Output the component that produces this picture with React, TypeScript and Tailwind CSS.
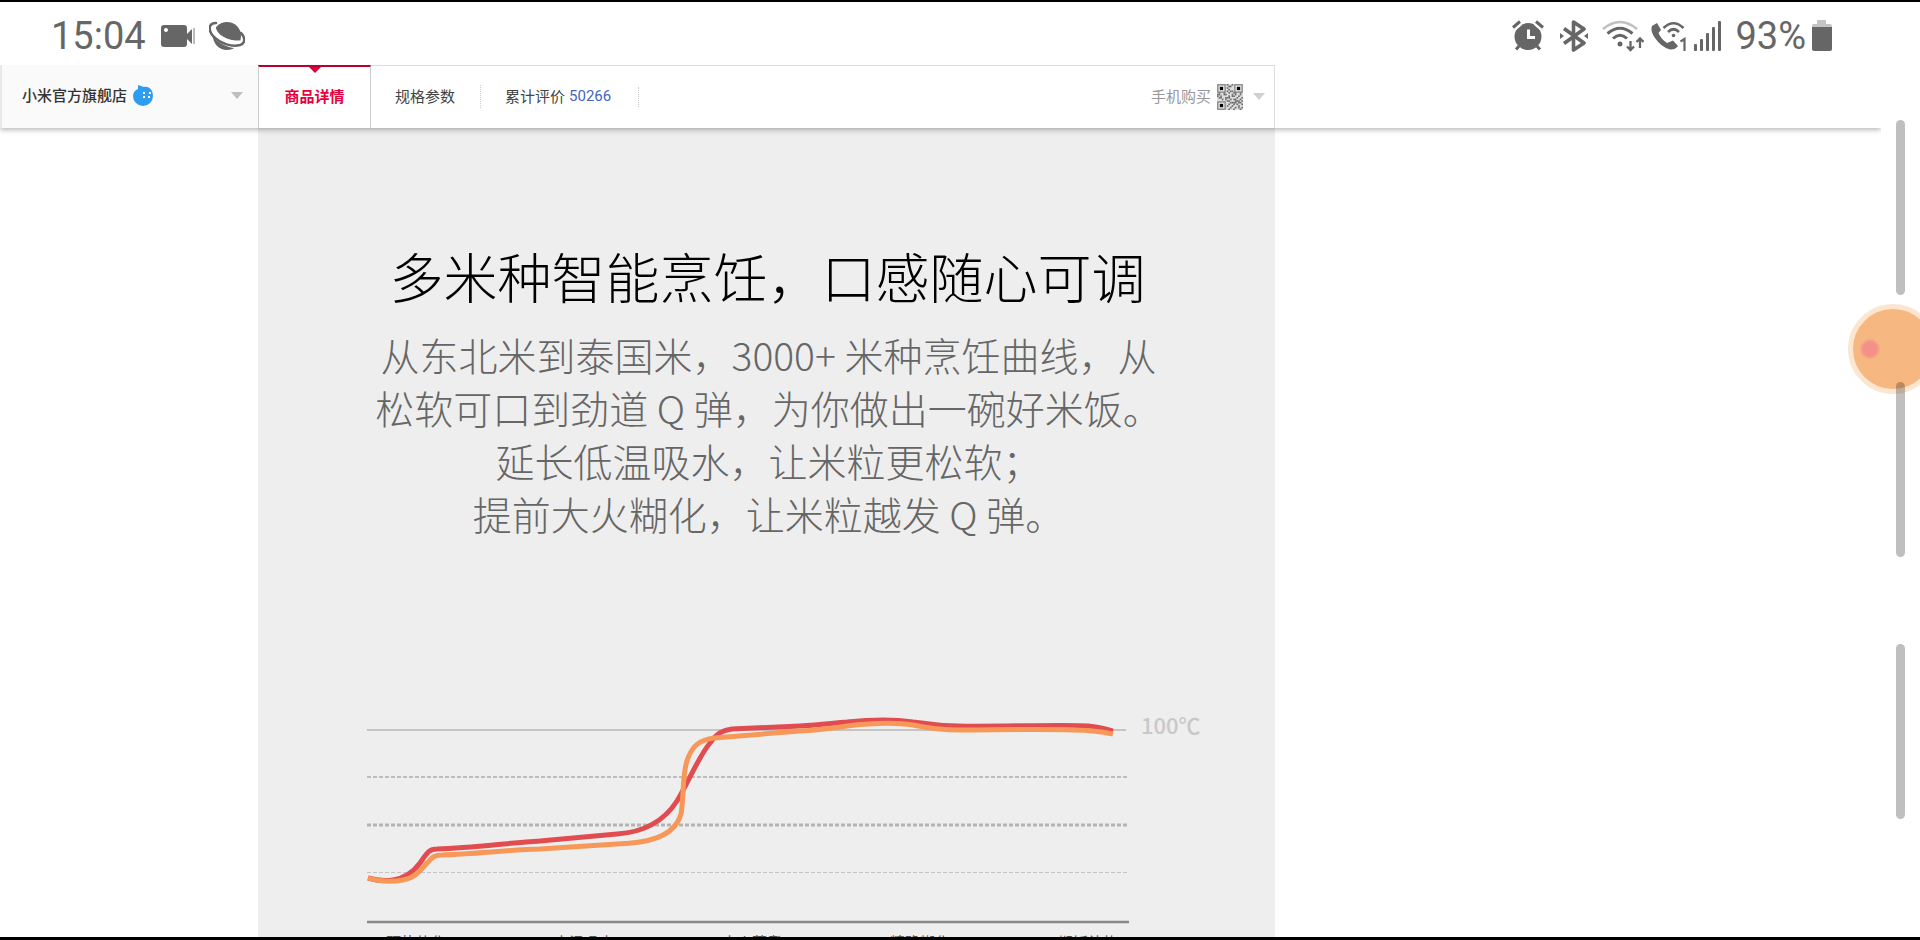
import clsx from "clsx";

const stages = ["预热软化", "中温吸水", "大火蒸煮", "精确糊化", "焖饭补炊"];

// 1 = dark module, the three finder squares are drawn separately
const qrRows = [
  "0000001001000000",
  "0000000110000000",
  "0000001000000000",
  "0000000100000000",
  "0000001011000000",
  "0100100100110010",
  "1100110001010010",
  "1010000101100100",
  "0110011100001001",
  "0001010010110010",
  "0000001100011101",
  "0000000011110110",
  "0000000100101001",
  "0000001001000100",
  "0000000010010101",
  "0000000100100010",
];

function QrCode() {
  return (
    <svg viewBox="0 0 32 32" className="h-[26px] w-[26px] shrink-0" aria-hidden="true">
      <rect width="32" height="32" fill="#dedede" />
      {qrRows.map((row, y) =>
        row.split("").map((cell, x) =>
          cell === "1" ? <rect key={`${x}-${y}`} x={x * 2} y={y * 2} width="2" height="2" fill="#6a6a6a" /> : null
        )
      )}
      {[[0, 0], [21, 0], [0, 21]].map(([x, y]) => (
        <g key={`${x}-${y}`}>
          <rect x={x + 1} y={y + 1} width="9" height="9" fill="#e2e2e2" stroke="#808080" strokeWidth="1.5" />
          <rect x={x + 3.5} y={y + 3.5} width="4" height="4" fill="#000" />
        </g>
      ))}
    </svg>
  );
}

function StatusBar() {
  return (
    <header className="flex h-[65px] shrink-0 items-center border-t-2 border-black pt-1 pr-[87px] pl-[51px] font-[Roboto,sans-serif] text-[38px] leading-none font-normal text-[#666]">
      <time className="mr-[15px]">15:04</time>
      <svg viewBox="0 0 34 22" className="mr-[14px] h-[22px] w-[34px]" fill="#666" aria-hidden="true">
        <path d="M3 0h20a3 3 0 0 1 3 3v16a3 3 0 0 1-3 3H3a3 3 0 0 1-3-3V3a3 3 0 0 1 3-3zM5 3a2 2 0 1 0 .01 0z" fillRule="evenodd" />
        <path d="M26 9l5-5v15l-5-5z" />
        <path d="M32 3h2v16h-2z" fill="#bbb" />
      </svg>
      <svg viewBox="0 0 36 30" className="h-[30px] w-9" aria-hidden="true">
        <circle cx="18" cy="15" r="14" fill="#666" />
        <path d="M3 5C4 17 18 24 32 24" fill="none" stroke="#fff" strokeWidth="7" />
        <path d="M7 2C-1 2-1 10 5 16C12 23 23 26 31 24C37 22 36 16 32 12" fill="none" stroke="#666" strokeWidth="2.500" strokeLinecap="round" />
        <path d="M4 5C4 14 19 22 31 20.500" fill="none" stroke="#fff" strokeWidth="2.500" />
      </svg>

      <div className="ml-auto flex items-center">
        <svg viewBox="0 0 32 31" className="mr-[15px] h-[31px] w-8" aria-hidden="true">
          <path d="M8 25l-4 4.500M24 25l4 4.500" stroke="#666" strokeWidth="3" />
          <circle cx="16" cy="16.500" r="13.500" fill="#666" />
          <path d="M1 8l7-6M31 8l-7-6" stroke="#fff" strokeWidth="7" />
          <path d="M1 7.500l7-6M31 7.500l-7-6" stroke="#666" strokeWidth="3" />
          <path d="M16.500 9.500V17.500H23" fill="none" stroke="#fff" strokeWidth="3" />
        </svg>
        <svg viewBox="0 0 30 32" className="mr-[13px] h-8 w-[30px]" aria-hidden="true">
          <path d="M5 8.500L25 23L14.500 30V2L25 9L5 23.500" fill="none" stroke="#666" strokeWidth="3.600" strokeLinejoin="round" />
          <path d="M1 13l4 3-4 3zM29 13l-4 3 4 3z" fill="#666" />
        </svg>
        <svg viewBox="0 0 42 32" className="mr-[7px] h-8 w-[42px]" fill="none" stroke="#666" aria-hidden="true">
          <path d="M1 9Q18-5 35 9" stroke="#c0c0c0" strokeWidth="2.600" />
          <path d="M5.500 13.500Q18 3 30.500 13.500" strokeWidth="3" />
          <path d="M11 18.500Q18 12 25 18.500" strokeWidth="3" />
          <circle cx="18" cy="24" r="2.500" fill="#666" stroke="none" />
          <path d="M28.500 21v9M25 26.500l3.500 3.500 3.500-3.500M38 28v-9M34.500 22l3.500-3.500 3.500 3.500" strokeWidth="2.300" />
        </svg>
        <svg viewBox="0 0 37 30" className="mr-[6px] h-[30px] w-[37px]" aria-hidden="true">
          <path d="M6 2L1 5Q-1 10 4 17Q10 26 19 28.500Q24 29 27 25L22 19.500L16 22Q10 18 7.500 12L10 9z" fill="#666" />
          <path d="M12.500 7Q22.500-2.500 32.500 7M17 11Q22.500 5.500 28 11" fill="none" stroke="#666" strokeWidth="2.600" />
          <circle cx="22.500" cy="14.500" r="1.800" fill="#666" />
          <path d="M29.500 20.500l4-2.500V30" fill="none" stroke="#666" strokeWidth="2.200" />
        </svg>
        <svg viewBox="0 0 28 30" className="mr-[13px] h-[30px] w-7" fill="#666" aria-hidden="true">
          <rect x="0" y="23" width="3" height="7" rx="1" />
          <rect x="6" y="18" width="3" height="12" rx="1" />
          <rect x="12" y="12" width="3" height="18" rx="1" />
          <rect x="18" y="6" width="3" height="24" rx="1" />
          <rect x="24" y="0" width="3" height="30" rx="1" />
        </svg>
        <span className="mr-[5px]">93%</span>
        <svg viewBox="0 0 22 31" className="h-[31px] w-[22px]" aria-hidden="true">
          <path d="M6 0h9v4h4q2 0 2 3H1q0-3 1-3h4z" fill="#c4c4c4" />
          <path d="M1 7h20v22q0 2-2 2H3q-2 0-2-2z" fill="#666" />
        </svg>
      </div>
    </header>
  );
}

function Caret({ className }: { className?: string }) {
  return (
    <svg viewBox="0 0 12 7" className={clsx("h-[7px] w-3", className)} fill="currentColor" aria-hidden="true">
      <path d="M0 0h12L6 7z" />
    </svg>
  );
}

function ShopNav() {
  return (
    <nav className="relative z-10 flex h-[63px] shrink-0 bg-white text-[15px] text-[#444] shadow-[0_2px_5px_rgba(0,0,0,0.28)]">
      <button className="flex w-[258px] shrink-0 items-center border-l-2 border-[#e8e8e8] bg-[#fafafa] pr-[15px] pb-[3px] pl-5 font-medium text-[#333]">
        小米官方旗舰店
        <svg viewBox="0 0 22 22" className="ml-[5px] h-[22px] w-[22px]" aria-hidden="true">
          <path d="M6 1L12 3C18 2 21 7 21 12A10 10 0 0 1 1 12Q1 7 6 5z" fill="#2e9df0" />
          <path d="M12 8v2M12 12v2M18 8v2M17 12v2" stroke="#fff" strokeWidth="2" />
        </svg>
        <Caret className="ml-auto text-[#bfbfbf]" />
      </button>
      <div className="flex w-[1017px] border-r border-[#ddd]">
        <a href="#detail" className="relative flex w-[113px] items-center justify-center border-x border-t-2 border-x-[#ccc] border-t-[#b80034] pb-[2px] font-bold text-[#e4003d]">
          商品详情
          <svg viewBox="0 0 12 6" className="absolute top-0 h-[6px] w-3" aria-hidden="true">
            <path d="M0 0h12L6 6z" fill="#dd0038" />
          </svg>
        </a>
        <div className="flex flex-1 items-center border-t border-[#ddd] pb-px">
          <a href="#specs" className="pr-[25px] pl-6">规格参数</a>
          <a href="#reviews" className="flex border-l border-dotted border-[#ccc] pr-[27px] pl-6">
            累计评价 <span className="ml-1 font-[Roboto,sans-serif] text-[#4466bb]">50266</span>
          </a>
          <span className="h-5 border-l border-dotted border-[#ccc]" />
          <button className="ml-auto flex items-center pr-[9px] text-[#999]">
            手机购买
            <span className="mr-[10px] ml-[6px]"><QrCode /></span>
            <Caret className="text-[#d0d0d0]" />
          </button>
        </div>
      </div>
    </nav>
  );
}

function CookingChart() {
  return (
    <figure className="mt-[176px] pl-[108px]">
      <div className="flex items-start">
        <svg viewBox="0 0 763 210" className="w-[763px]" fill="none" role="img" aria-label="烹饪曲线">
          <path d="M1 14H760" stroke="#c4c4c4" strokeWidth="2" />
          <path d="M1 61H763" stroke="#bcbcbc" strokeWidth="2" strokeDasharray="4 2" />
          <path d="M1 109H763" stroke="#b4b4b4" strokeWidth="3" strokeDasharray="4 2" />
          <path d="M1 156.500H763" stroke="#c4c4c4" strokeWidth="1" strokeDasharray="4 2" />
          <path d="M1 206H763" stroke="#888" strokeWidth="2.500" />
          <path
            d="M2 162C12 165 20 165 27 164C36 163 47 157 54 147C61 137 63 133 71 133C108 132 140 127 174 125L251 118C282 116 300 102 311 85C324 63 333 40 344 27C351 17 357 14 366 13L434 10C455 9 467 7 481 6C500 4 528 3 547 6C566 8 572 10 592 10C628 11 704 8 722 10Q738 12 747 15"
            stroke="#e04c50"
            strokeWidth="5"
          />
          <path
            d="M2 162C14 166 26 166 37 164C49 162 54 155 61 147C66 141 69 139 76 139C110 138 140 134 174 133L251 128C280 127 308 122 315 98C318 82 316 55 322 42C327 29 334 24 348 22L434 15C455 14 467 12 481 10C505 7 528 6 547 9C566 13 577 14 594 14C628 14 704 12 727 15Q738 16 747 18"
            stroke="#f79758"
            strokeWidth="5"
          />
        </svg>
        <span className="ml-3 text-[22px] leading-4 font-medium text-[#c8c8c8]">100℃</span>
      </div>
      <figcaption className="mt-[5px] flex justify-between pr-[157px] pl-5 text-[15px] text-[#555]">
        {stages.map((stage) => (
          <span key={stage}>{stage}</span>
        ))}
      </figcaption>
    </figure>
  );
}

function ScrollRail() {
  return (
    <aside className="relative z-20 w-[39px] shrink-0">
      <button
        aria-label="悬浮球"
        className="absolute top-[239px] left-[-33px] flex h-[90px] w-[90px] items-center rounded-full border-[5px] border-[#fde6d0] bg-[#f6b880] pl-2"
      >
        <span className="h-[18px] w-[18px] rounded-full bg-[#f4908a] blur-[1px]" />
      </button>
      <div className="relative flex flex-col items-end gap-[87px] pt-[55px] pr-[15px]">
        <span className="h-[175px] w-[9px] rounded-full bg-black/25" />
        <span className="h-[175px] w-[9px] rounded-full bg-black/25" />
        <span className="h-[175px] w-[9px] rounded-full bg-black/25" />
      </div>
    </aside>
  );
}

export default function App() {
  return (
    <div className="flex h-screen flex-col overflow-hidden border-b-3 border-black bg-white font-['Noto_Sans_CJK_SC',sans-serif]">
      <StatusBar />
      <div className="flex min-h-0 flex-1 overflow-hidden">
        <div className="flex min-w-0 flex-1 flex-col overflow-hidden">
          <ShopNav />
          <main id="detail" className="ml-[258px] min-h-0 w-[1017px] flex-1 overflow-hidden bg-[#eee] pt-[112px]">
            <h1 className="pl-[2px] text-center text-[54px] leading-[72px] font-light text-black">多米种智能烹饪，口感随心可调</h1>
            <p className="mt-4 pl-1 text-center text-[39px] leading-[53px] font-light text-[#666]">
              从东北米到泰国米，3000+ 米种烹饪曲线，从
              <br />
              松软可口到劲道 Q 弹，为你做出一碗好米饭。
              <br />
              延长低温吸水，让米粒更松软；
              <br />
              提前大火糊化，让米粒越发 Q 弹。
            </p>
            <CookingChart />
          </main>
        </div>
        <ScrollRail />
      </div>
    </div>
  );
}
